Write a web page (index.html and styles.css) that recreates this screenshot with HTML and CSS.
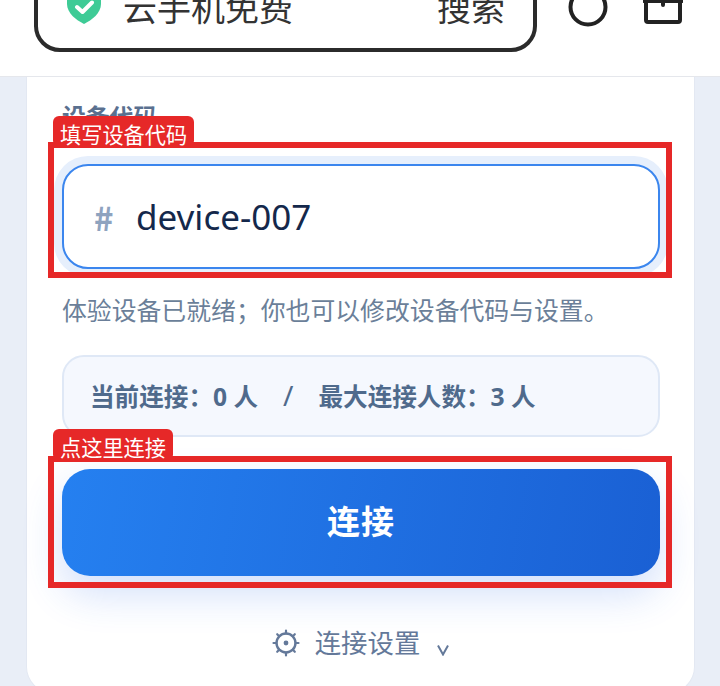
FILE: index.html
```html
<!DOCTYPE html>
<html lang="zh-CN">
<head>
<meta charset="utf-8">
<title>连接设备</title>
<link rel="stylesheet" href="styles.css">
</head>
<body>
<header class="topbar">
  <div class="search">
    <svg class="shield" width="34" height="48" viewBox="0 0 34 48"><path d="M17 0 L34 5 V28 C34 37 25 44 17 48 C9 44 0 37 0 28 V5 Z" fill="#3ecb96"/><path d="M10 31 L15.5 36 L25 26.5" fill="none" stroke="#fff" stroke-width="4" stroke-linecap="round" stroke-linejoin="round"/></svg>
    <span class="search-text">云手机免费</span>
    <span class="search-btn">搜索</span>
  </div>
  <svg class="ico-circle" width="40" height="40" viewBox="0 0 40 40"><circle cx="20" cy="20" r="17.5" fill="none" stroke="#222" stroke-width="4"/></svg>
  <svg class="ico-box" width="40" height="40" viewBox="0 0 40 40"><path d="M3 18 V36 Q3 38 5 38 H35 Q37 38 37 36 V18 M1 17 H39 M20 10 V21" fill="none" stroke="#222" stroke-width="4" stroke-linecap="round"/></svg>
</header>
<main class="card">
  <div class="field-label">设备代码</div>
  <div class="field">
    <span class="hash">#</span>
    <span class="value">device-007</span>
    <div class="mark mark-a"><span class="tag">填写设备代码</span></div>
  </div>
  <p class="hint">体验设备已就绪；你也可以修改设备代码与设置。</p>
  <div class="info">
    <span>当前连接：0 人</span>
    <span class="sep">/</span>
    <span>最大连接人数：3 人</span>
  </div>
  <div class="btn-wrap">
    <button class="connect">连接</button>
    <div class="mark mark-b"><span class="tag">点这里连接</span></div>
  </div>
  <div class="settings">
    <svg width="28" height="28" viewBox="0 0 28 28" fill="none" stroke="#64799a"><circle cx="14" cy="14" r="9.5" stroke-width="2.4"/><circle cx="14" cy="14" r="2.4" fill="#64799a" stroke="none"/><path d="M14 1.5V4.5M14 23.5V26.5M1.5 14H4.5M23.5 14H26.5M5.2 5.2L7.2 7.2M20.8 20.8L22.8 22.8M5.2 22.8L7.2 20.8M20.8 7.2L22.8 5.2" stroke-width="2.2" stroke-linecap="round"/></svg>
    <span class="settings-text">连接设置</span>
    <svg class="chev" width="12" height="12" viewBox="0 0 12 12"><path d="M1 1.5L6 10.5L11 1.5" fill="none" stroke="#64799a" stroke-width="2"/></svg>
  </div>
</main>
</body>
</html>
```
FILE: styles.css
```css
* { box-sizing: border-box; }
html, body { margin: 0; height: 686px; overflow: hidden; }
body {
  background: #e9eef7;
  font-family: "Noto Sans", "Noto Sans CJK SC", sans-serif;
}
.topbar {
  height: 77px;
  background: #fff;
  border-bottom: 1px solid #e5e7ec;
  display: flex;
  align-items: flex-end;
  padding: 0 38px 24px 34px;
  overflow: hidden;
}
.search {
  width: 503px;
  height: 100px;
  flex: none;
  border: 4px solid #2b2b2b;
  border-radius: 26px;
  display: flex;
  align-items: flex-end;
  padding: 0 28px 18px 29px;
  color: #333;
  font-size: 34px;
  line-height: 44px;
}
.shield { flex: none; margin-bottom: 6px; }
.search-text { margin-left: 22px; flex: 1; }
.search-btn { flex: none; }
.ico-circle { flex: none; margin-left: 31px; margin-bottom: 25px; }
.ico-box { flex: none; margin-left: 35px; margin-bottom: 28px; }
.card {
  margin: 0 25px 0 26px;
  height: 616px;
  background: #fff;
  border: 1px solid #e3e8f2;
  border-top: 0;
  border-radius: 0 0 26px 26px;
  padding: 25px 34px 0 35px;
}
.field-label {
  font-size: 23.8px;
  line-height: 30px;
  font-weight: 700;
  color: #5a708f;
  margin-bottom: 32px;
}
.field {
  position: relative;
  height: 105px;
  border: 2px solid #3b86ee;
  border-radius: 26px;
  background: #fff;
  box-shadow: 0 0 0 8px #e6effc;
  display: flex;
  align-items: center;
  padding: 0 30px;
}
.hash { font-family: "Noto Sans CJK SC", sans-serif; font-size: 33px; font-weight: 700; color: #8ea3bf; width: 42px; flex: none; }
.value { font-size: 35px; color: #14284b; }
.mark {
  position: absolute;
  border: 6px solid #e62828;
  pointer-events: none;
}
.mark-a { top: -24px; bottom: -11px; left: -16px; right: -14px; }
.mark-b { top: -13px; bottom: -12px; left: -14px; right: -12px; }
.tag {
  position: absolute;
  left: -1px;
  top: -32px;
  height: 27px;
  padding: 0 7px;
  background: #e62828;
  border-radius: 6px 6px 2px 2px;
  color: #fff;
  font-size: 21.2px;
  line-height: 37px;
  white-space: nowrap;
}
.mark-b .tag { top: -33px; height: 28px; line-height: 38px; }
.hint {
  margin: 23px 0 0;
  font-size: 24.85px;
  line-height: 36px;
  color: #6b7f99;
  white-space: nowrap;
}
.info {
  margin-top: 27px;
  height: 82px;
  background: #f5f8fe;
  border: 2px solid #dfe8f6;
  border-radius: 22px;
  display: flex;
  align-items: center;
  padding: 0 26px 3px;
  color: #4f6a8c;
  font-size: 24.6px;
  font-weight: 700;
}
.sep { font-weight: 400; font-size: 28px; margin: 0 25px; }
.btn-wrap { position: relative; margin-top: 32px; }
.connect {
  display: block;
  width: 100%;
  height: 107px;
  border: 0;
  border-radius: 28px;
  padding: 0 0 5px;
  background: linear-gradient(100deg, #2580f0, #1a60d4);
  box-shadow: 0 18px 40px rgba(37, 99, 235, 0.2);
  color: #fff;
  font-family: inherit;
  font-size: 33px;
  font-weight: 700;
  letter-spacing: 1px;
}
.settings {
  margin-top: 49px;
  height: 36px;
  display: flex;
  align-items: center;
  justify-content: center;
  color: #64799a;
  font-size: 26.4px;
  padding-right: 1px;
}
.settings-text { margin: 0 17px 3px 15px; }
.chev { margin-top: 14px; }
```
